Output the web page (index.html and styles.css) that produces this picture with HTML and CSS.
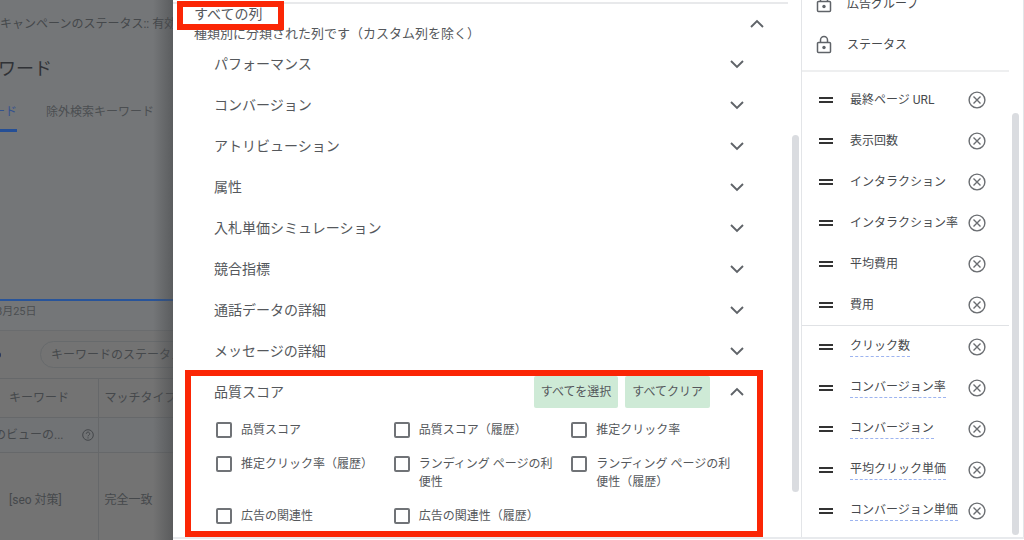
FILE: index.html
```html
<!DOCTYPE html>
<html lang="ja">
<head>
  <meta charset="UTF-8" />
  <meta name="viewport" content="width=device-width, initial-scale=1.0" />
  <title>表示項目の変更</title>
  <link rel="stylesheet" href="styles.css">
</head>
<body>
  <svg class="sprite" aria-hidden="true">
    <symbol id="down" viewBox="0 0 24 24"><path d="M6 9l6 6 6-6" fill="none" stroke="currentColor" stroke-width="1.9"/></symbol>
    <symbol id="up" viewBox="0 0 24 24"><path d="M6 15l6-6 6 6" fill="none" stroke="currentColor" stroke-width="1.9"/></symbol>
    <symbol id="lock" viewBox="0 0 16 20"><path d="M2.500 7.500h11a1 1 0 0 1 1 1v8a1 1 0 0 1-1 1h-11a1 1 0 0 1-1-1v-8a1 1 0 0 1 1-1zM4.500 7.500V5a3.500 3.500 0 0 1 7 0v2.500" fill="none" stroke="currentColor" stroke-width="1.500"/><circle cx="8" cy="12.500" r="1.700" fill="currentColor"/></symbol>
    <symbol id="handle" viewBox="0 0 14 8"><path d="M0 2h14M0 6h14" stroke="currentColor" stroke-width="2"/></symbol>
    <symbol id="remove" viewBox="0 0 18 18"><circle cx="9" cy="9" r="7.900" fill="none" stroke="currentColor" stroke-width="1.400"/><path d="M5.500 5.500l7 7M12.500 5.500l-7 7" stroke="currentColor" stroke-width="1.400"/></symbol>
  </svg>

  <div class="page">
    <div class="page-inner">
      <p class="status">キャンペーンのステータス:: 有効</p>
      <h1>キーワード</h1>
      <nav class="tabs">
        <a href="#" class="tab active">キーワード</a>
        <a href="#" class="tab">除外検索キーワード</a>
      </nav>
      <div class="chart"></div>
      <p class="date">8月25日</p>
      <div class="filter">
        <span class="filter-mark"></span>
        <button type="button" class="chip">キーワードのステータス</button>
      </div>
      <table class="keywords">
        <thead>
          <tr><th>キーワード</th><th>マッチタイプ</th></tr>
        </thead>
        <tbody>
          <tr class="total">
            <td>
              <div class="view">
                <span>のビューの...</span>
                <svg width="12" height="12" viewBox="0 0 12 12"><circle cx="6" cy="6" r="5.300" fill="none" stroke="currentColor"/><path d="M4.300 4.800a1.700 1.700 0 1 1 2.600 1.400c-.6.400-.9.600-.9 1.200M6 8.300v1.200" fill="none" stroke="currentColor"/></svg>
              </div>
            </td>
            <td></td>
          </tr>
          <tr class="item"><td>[seo 対策]</td><td>完全一致</td></tr>
        </tbody>
      </table>
    </div>
  </div>

  <main class="panel">
    <div class="panel-body">
      <section class="columns">
        <header class="all">
          <div>
            <h2><span class="marked">すべての列</span></h2>
            <p>種類別に分類された列です（カスタム列を除く）</p>
          </div>
          <button type="button" aria-label="閉じる"><svg class="chevron"><use href="#up"/></svg></button>
        </header>

        <button type="button" class="group">パフォーマンス<svg class="chevron"><use href="#down"/></svg></button>
        <button type="button" class="group">コンバージョン<svg class="chevron"><use href="#down"/></svg></button>
        <button type="button" class="group">アトリビューション<svg class="chevron"><use href="#down"/></svg></button>
        <button type="button" class="group">属性<svg class="chevron"><use href="#down"/></svg></button>
        <button type="button" class="group">入札単価シミュレーション<svg class="chevron"><use href="#down"/></svg></button>
        <button type="button" class="group">競合指標<svg class="chevron"><use href="#down"/></svg></button>
        <button type="button" class="group">通話データの詳細<svg class="chevron"><use href="#down"/></svg></button>
        <button type="button" class="group">メッセージの詳細<svg class="chevron"><use href="#down"/></svg></button>

        <div class="quality">
          <div class="group">
            <h3>品質スコア</h3>
            <div class="actions">
              <button type="button" class="btn">すべてを選択</button>
              <button type="button" class="btn">すべてクリア</button>
            </div>
            <button type="button" aria-label="閉じる"><svg class="chevron"><use href="#up"/></svg></button>
          </div>
          <div class="options">
            <label><input type="checkbox"><span>品質スコア</span></label>
            <label><input type="checkbox"><span>品質スコア（履歴）</span></label>
            <label><input type="checkbox"><span>推定クリック率</span></label>
            <label><input type="checkbox"><span>推定クリック率（履歴）</span></label>
            <label><input type="checkbox"><span>ランディング ページの利便性</span></label>
            <label><input type="checkbox"><span>ランディング ページの利便性（履歴）</span></label>
            <label><input type="checkbox"><span>広告の関連性</span></label>
            <label><input type="checkbox"><span>広告の関連性（履歴）</span></label>
          </div>
        </div>
        <div class="scrollbar"></div>
      </section>

      <aside class="selected">
        <ul class="locked">
          <li><svg class="lock"><use href="#lock"/></svg>広告グループ</li>
          <li><svg class="lock"><use href="#lock"/></svg>ステータス</li>
        </ul>
        <ul class="sortable">
          <li><svg class="handle"><use href="#handle"/></svg><span>最終ページ URL</span><button type="button" aria-label="削除"><svg><use href="#remove"/></svg></button></li>
          <li><svg class="handle"><use href="#handle"/></svg><span>表示回数</span><button type="button" aria-label="削除"><svg><use href="#remove"/></svg></button></li>
          <li><svg class="handle"><use href="#handle"/></svg><span>インタラクション</span><button type="button" aria-label="削除"><svg><use href="#remove"/></svg></button></li>
          <li><svg class="handle"><use href="#handle"/></svg><span>インタラクション率</span><button type="button" aria-label="削除"><svg><use href="#remove"/></svg></button></li>
          <li><svg class="handle"><use href="#handle"/></svg><span>平均費用</span><button type="button" aria-label="削除"><svg><use href="#remove"/></svg></button></li>
          <li><svg class="handle"><use href="#handle"/></svg><span>費用</span><button type="button" aria-label="削除"><svg><use href="#remove"/></svg></button></li>
        </ul>
        <ul class="sortable hinted">
          <li><svg class="handle"><use href="#handle"/></svg><span>クリック数</span><button type="button" aria-label="削除"><svg><use href="#remove"/></svg></button></li>
          <li><svg class="handle"><use href="#handle"/></svg><span>コンバージョン率</span><button type="button" aria-label="削除"><svg><use href="#remove"/></svg></button></li>
          <li><svg class="handle"><use href="#handle"/></svg><span>コンバージョン</span><button type="button" aria-label="削除"><svg><use href="#remove"/></svg></button></li>
          <li><svg class="handle"><use href="#handle"/></svg><span>平均クリック単価</span><button type="button" aria-label="削除"><svg><use href="#remove"/></svg></button></li>
          <li><svg class="handle"><use href="#handle"/></svg><span>コンバージョン単価</span><button type="button" aria-label="削除"><svg><use href="#remove"/></svg></button></li>
        </ul>
        <div class="scrollbar"></div>
      </aside>
    </div>
    <footer class="panel-foot"></footer>
  </main>
</body>
</html>
```
FILE: styles.css
```css
* { box-sizing: border-box; margin: 0; padding: 0; }
body {
  display: flex;
  height: 100vh;
  overflow: hidden;
  background: #fff;
  color: #55585c;
  font-family: Roboto, 'Noto Sans CJK JP', sans-serif;
  font-size: 12px;
  line-height: 18px;
}
button { font: inherit; color: inherit; background: none; border: none; cursor: pointer; }
h1, h2, h3 { font-weight: 400; }
ul { list-style: none; }
svg { display: block; flex: none; }
.sprite { position: absolute; width: 0; height: 0; }

/* dimmed page behind the panel */
.page {
  position: relative;
  flex: none;
  width: 173px;
  overflow: hidden;
  background: #747678;
  color: #45484b;
  white-space: nowrap;
}
.page::after {
  content: "";
  position: absolute;
  top: 0; right: 0; bottom: 0;
  width: 20px;
  background: linear-gradient(to right, rgba(70,72,74,0), rgba(70,72,74,0.55));
}
.page-inner { width: 400px; margin-left: -43px; }
.status { padding: 15px 0 12px 43px; }
h1 { padding: 12px 0 12px 5px; font-size: 18px; line-height: 24px; color: #303236; }
.tabs { display: flex; gap: 29px; }
.tab { padding: 10px 0 8px; color: #4b4e51; text-decoration: none; border-bottom: 3px solid transparent; }
.tab.active { color: #34528e; border-color: #254f96; }
.chart { height: 169px; border-bottom: 2px solid #28549a; }
.date { padding: 2px 0 9px 39px; font-size: 11px; color: #4b4e51; }
.filter { display: flex; align-items: center; gap: 39px; height: 48px; padding-left: 41px; border-top: 1px solid #6a6c6e; background: #737373; }
.filter-mark { width: 3px; height: 6px; background: #26365c; border-radius: 0 3px 3px 0; }
.chip { height: 27px; padding: 0 10px; border: 1px solid #676a6c; border-radius: 14px; }
.keywords { width: 100%; border-collapse: collapse; background: #737373; }
.keywords th, .keywords td { padding: 0 0 0 6px; text-align: left; font-weight: 400; border-top: 1px solid #66686a; }
.keywords th:first-child, .keywords td:first-child { width: 141px; padding-left: 52px; border-right: 1px solid #66686a; }
.keywords th { height: 39px; }
.keywords .total { background: #717375; }
.keywords .total td { height: 35px; }
.keywords .total td:first-child { padding-left: 37px; }
.view { display: flex; justify-content: space-between; align-items: center; padding-right: 4px; }
.keywords .item td { height: 94px; }

/* column picker */
.panel { flex: 1; min-width: 0; display: flex; flex-direction: column; }
.panel-body { flex: 1; min-height: 0; display: flex; }
.panel-foot { flex: none; height: 3px; border-top: 2px solid #e8eaed; }
.columns { position: relative; flex: 1; padding: 2px 13px 0 0; font-size: 14px; }
.all { display: flex; justify-content: space-between; align-items: center; padding: 0 19px 0 21px; border-top: 2px solid #e8e9eb; }
.all h2 { font-size: 14px; line-height: 20px; }
.all p { font-size: 13px; line-height: 19px; }
.marked { position: relative; }
.marked::after {
  content: "";
  position: absolute;
  inset: -5px -22px -8px -17px;
  border: 6px solid #fb2605;
  pointer-events: none;
}
.chevron { width: 24px; height: 24px; color: #5f6368; }
.group {
  display: flex;
  justify-content: space-between;
  align-items: center;
  width: 100%;
  height: 41px;
  padding: 0 39px 0 41px;
  text-align: left;
}
.group h3 { flex: 1; font-size: 14px; }
.actions { display: flex; gap: 7px; margin-right: 15px; }
.btn { height: 32px; padding: 0 7px; border-radius: 2px; background: #ceead6; font-size: 12px; }
.quality { position: relative; padding-bottom: 12px; }
.quality::after {
  content: "";
  position: absolute;
  inset: -1px 25px 0 12px;
  border: 6px solid #fb2605;
  pointer-events: none;
}
.options { display: grid; grid-template-columns: repeat(3, 1fr); row-gap: 16px; padding: 9px 39px 0 43px; font-size: 12px; }
.options label { display: flex; align-items: flex-start; gap: 9px; padding-right: 10px; }
.options input { appearance: none; flex: none; width: 16px; height: 16px; margin-top: 1px; border: 2px solid #707377; border-radius: 2px; }

/* selected columns */
.selected { position: relative; flex: none; width: 223px; padding-right: 14px; border-left: 1px solid #e3e5e8; border-right: 1px solid #e3e5e8; color: #46494d; }
.selected li { display: flex; align-items: center; height: 41px; white-space: nowrap; }
.locked { margin-top: -17px; padding-bottom: 5px; border-bottom: 2px solid #eeeff0; }
.locked li { gap: 15px; padding-left: 14px; }
.lock { width: 16px; height: 20px; color: #5f6368; }
.sortable li { padding: 0 23px 0 17px; }
.locked + .sortable { padding-top: 7px; }
.handle { width: 14px; height: 8px; margin-right: 17px; color: #333; }
.sortable button { margin-left: auto; }
.sortable button svg { width: 18px; height: 18px; color: #6a6d71; }
.hinted { border-top: 1px solid #e0e2e5; }
.hinted span { line-height: 20px; border-bottom: 1px dashed #9db4f0; }

.scrollbar { position: absolute; width: 7px; border-radius: 4px; background: #dadce0; }
.columns .scrollbar { top: 135px; right: 2px; height: 357px; }
.selected .scrollbar { top: 113px; right: 4px; height: 422px; }
```
